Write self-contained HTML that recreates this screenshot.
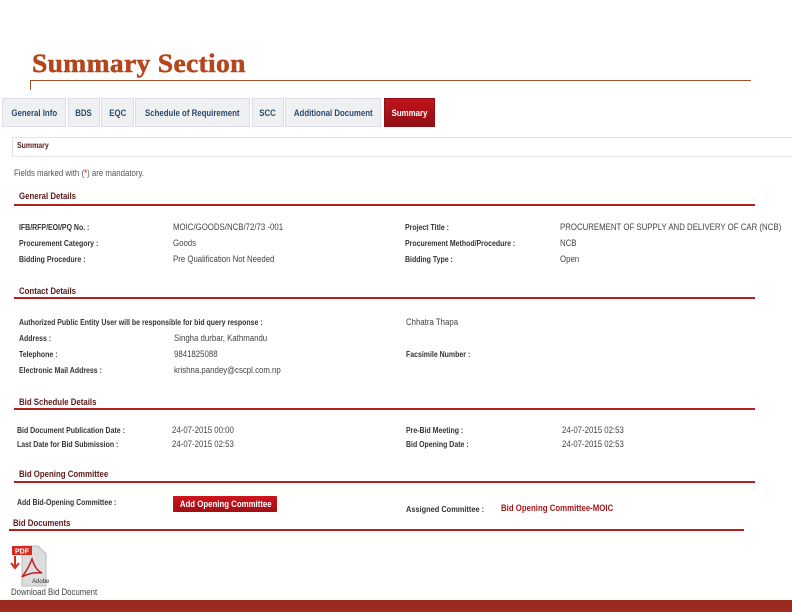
<!DOCTYPE html>
<html><head><meta charset="utf-8"><style>
*{margin:0;padding:0;box-sizing:border-box}
body{width:792px;height:612px;background:#fff;position:relative;overflow:hidden;font-family:"Liberation Sans",sans-serif;color:#333}
.a{position:absolute;white-space:nowrap;transform-origin:0 0}
.n{transform:scaleX(.87)}
.t{font-family:"Liberation Serif",serif;font-weight:bold;font-size:26px;color:#b5451b;left:32px;top:49px;transform:scaleX(1.06);letter-spacing:.3px;-webkit-text-stroke:.5px #b5451b}
.tab{position:absolute;top:98px;height:29px;background:#eef0f2;border:1px solid #dde;font-weight:bold;font-size:9px;color:#2a4a6a;text-align:center;line-height:28px;white-space:nowrap}
.tab span{display:inline-block;transform:scaleX(.87)}
.lb{font-size:8px;font-weight:bold;color:#333;line-height:10px}
.v{font-size:9px;color:#444;line-height:10px}
.h{font-size:9px;font-weight:bold;color:#5a1a1a}
.ln{position:absolute;height:2px;background:#b32020}
</style></head><body>
<div class="a t">Summary Section</div>
<div class="a" style="left:30px;top:80px;width:721px;height:1px;background:#a0522d"></div>
<div class="a" style="left:30px;top:80px;width:1px;height:10px;background:#a0522d"></div>

<div class="tab" style="left:2px;width:64px"><span>General Info</span></div>
<div class="tab" style="left:68px;width:32px"><span>BDS</span></div>
<div class="tab" style="left:101px;width:33px"><span>EQC</span></div>
<div class="tab" style="left:135px;width:115px"><span>Schedule of Requirement</span></div>
<div class="tab" style="left:252px;width:32px"><span>SCC</span></div>
<div class="tab" style="left:285px;width:96px"><span>Additional Document</span></div>
<div class="tab" style="left:384px;width:51px;background:linear-gradient(#c4141c,#8e0f14);color:#fff;border-color:#8e0f14"><span>Summary</span></div>

<div class="a" style="left:12px;top:137px;width:790px;height:20px;border:1px solid #e2e2e2"></div>
<div class="a n" style="left:17px;top:141px;font-size:8px;font-weight:bold;color:#5a1a1a">Summary</div>
<div class="a n" style="left:14px;top:168px;font-size:9px;color:#555">Fields marked with (<span style="color:#c00">*</span>) are mandatory.</div>

<div class="a h n" style="left:19px;top:191px">General Details</div>
<div class="ln" style="left:14px;top:204px;width:741px"></div>
<div class="a lb n" style="left:19px;top:223px">IFB/RFP/EOI/PQ No. :</div>
<div class="a v n" style="left:173px;top:222px">MOIC/GOODS/NCB/72/73 -001</div>
<div class="a lb n" style="left:405px;top:223px">Project Title :</div>
<div class="a v n" style="left:560px;top:222px">PROCUREMENT OF SUPPLY AND DELIVERY OF CAR (NCB)</div>
<div class="a lb n" style="left:19px;top:239px">Procurement Category :</div>
<div class="a v n" style="left:173px;top:238px">Goods</div>
<div class="a lb n" style="left:405px;top:239px">Procurement Method/Procedure :</div>
<div class="a v n" style="left:560px;top:238px">NCB</div>
<div class="a lb n" style="left:19px;top:255px">Bidding Procedure :</div>
<div class="a v n" style="left:173px;top:254px">Pre Qualification Not Needed</div>
<div class="a lb n" style="left:405px;top:255px">Bidding Type :</div>
<div class="a v n" style="left:560px;top:254px">Open</div>

<div class="a h n" style="left:19px;top:286px">Contact Details</div>
<div class="ln" style="left:14px;top:297px;width:741px"></div>
<div class="a lb n" style="left:19px;top:318px">Authorized Public Entity User will be responsible for bid query response :</div>
<div class="a v n" style="left:406px;top:317px">Chhatra Thapa</div>
<div class="a lb n" style="left:19px;top:334px">Address :</div>
<div class="a v n" style="left:174px;top:333px">Singha durbar, Kathmandu</div>
<div class="a lb n" style="left:19px;top:350px">Telephone :</div>
<div class="a v n" style="left:174px;top:349px">9841825088</div>
<div class="a lb n" style="left:406px;top:350px">Facsimile Number :</div>
<div class="a lb n" style="left:19px;top:366px">Electronic Mail Address :</div>
<div class="a v n" style="left:174px;top:365px">krishna.pandey@cscpl.com.np</div>

<div class="a h n" style="left:19px;top:397px">Bid Schedule Details</div>
<div class="ln" style="left:14px;top:408px;width:741px"></div>
<div class="a lb n" style="left:17px;top:426px">Bid Document Publication Date :</div>
<div class="a v n" style="left:172px;top:425px">24-07-2015 00:00</div>
<div class="a lb n" style="left:406px;top:426px">Pre-Bid Meeting :</div>
<div class="a v n" style="left:562px;top:425px">24-07-2015 02:53</div>
<div class="a lb n" style="left:17px;top:440px">Last Date for Bid Submission :</div>
<div class="a v n" style="left:172px;top:439px">24-07-2015 02:53</div>
<div class="a lb n" style="left:406px;top:440px">Bid Opening Date :</div>
<div class="a v n" style="left:562px;top:439px">24-07-2015 02:53</div>

<div class="a h n" style="left:19px;top:469px">Bid Opening Committee</div>
<div class="ln" style="left:14px;top:481px;width:741px"></div>
<div class="a lb n" style="left:17px;top:498px">Add Bid-Opening Committee :</div>
<div class="a" style="left:173px;top:496px;width:104px;height:16px;background:linear-gradient(#d0141c,#a00f15);color:#fff;font-weight:bold;font-size:9px;text-align:center;line-height:16px;border-radius:1px"><span style="display:inline-block;transform:scaleX(.87)">Add Opening Committee</span></div>
<div class="a lb n" style="left:406px;top:504px;font-size:8.5px">Assigned Committee :</div>
<div class="a n" style="left:501px;top:503px;font-size:9px;font-weight:bold;color:#a01818">Bid Opening Committee-MOIC</div>
<div class="a h n" style="left:13px;top:518px">Bid Documents</div>
<div class="ln" style="left:9px;top:529px;width:735px"></div>

<svg class="a" style="left:10px;top:543px" width="40" height="45" viewBox="0 0 40 45">
<path d="M12 3h16l8 8v32H12z" fill="#ddd" stroke="#bbb"/>
<rect x="2" y="3" width="20" height="9" fill="#d42a20"/>
<text x="5" y="10.5" font-size="7" font-weight="bold" fill="#fff" font-family="Liberation Sans">PDF</text>
<path d="M5 13v10M1 20l4 5 4-5" stroke="#d42a20" stroke-width="2" fill="none"/>
<path d="M22 16c-3 8-7 14-10 18 5-3 12-5 20-4-6-3-8-8-10-14z" fill="none" stroke="#c02020" stroke-width="1.5"/>
<text x="22" y="40" font-size="6" fill="#333" font-family="Liberation Sans">Adobe</text>
</svg>
<div class="a n" style="left:11px;top:587px;font-size:9px;color:#444">Download Bid Document</div>
<div class="a" style="left:0;top:600px;width:792px;height:12px;background:#9b2a20"></div>
</body></html>
